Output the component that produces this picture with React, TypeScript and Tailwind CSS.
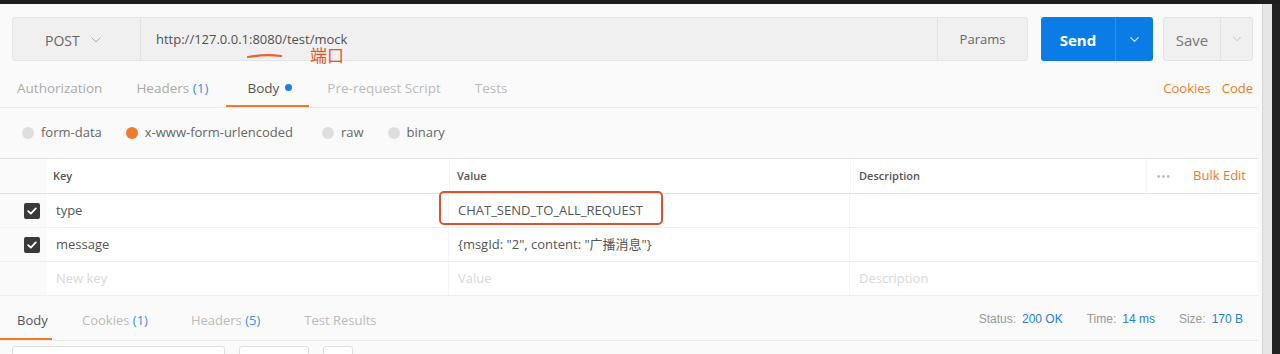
import { ChevronDown } from "lucide-react";

const orange = "text-[#f07a2a]";

const Check = () => (
  <div className="w-[16px] h-[16px] rounded-[2px] bg-[#3a3a3a] flex items-center justify-center">
    <svg width="10" height="8" viewBox="0 0 10 8" fill="none">
      <path d="M1.2 4.2 L3.8 6.6 L8.8 1.4" stroke="#fff" strokeWidth="1.8" strokeLinecap="round" strokeLinejoin="round" />
    </svg>
  </div>
);

const Radio = ({ on }: { on?: boolean }) => (
  <span
    className={`w-[12px] h-[12px] rounded-full ${on ? "bg-[#f07a2a]" : "bg-[#dedede]"}`}
  />
);

const Row = ({ k, v, placeholder, checked }: { k: string; v: string; placeholder?: boolean; checked?: boolean }) => (
  <div className="grid grid-cols-[47px_402px_401px_1fr] h-[34px] border-b border-[#eeeeee] bg-white">
    <div className="flex items-center pl-[24px] bg-[#fafafa]">{checked && <Check />}</div>
    <div className={`flex items-center pl-[9px] border-r border-[#f4f4f4] ${placeholder ? "text-[#d8d8d8]" : "text-[#555]"}`}>{k}</div>
    <div className={`flex items-center pl-[9px] border-r border-[#f4f4f4] ${placeholder ? "text-[#d8d8d8]" : "text-[#555]"}`}>{v}</div>
    <div className="flex items-center pl-[9px] text-[#d8d8d8]">{placeholder ? "Description" : ""}</div>
  </div>
);

export default function App() {
  return (
    <div
      className="w-[1280px] h-[354px] overflow-hidden bg-[#fafafa] flex flex-col text-[13px]"
      style={{ fontFamily: '"Open Sans", "Noto Sans CJK SC", sans-serif' }}
    >
      <div className="h-[4px] bg-[#1e1e1e] shrink-0" />
      <div className="flex flex-1 min-h-0">
        <div className="flex-1 min-w-0 relative">
          {/* request bar */}
          <div className="flex items-stretch h-[44px] mt-[13px] ml-[12px] mr-[9px]">
            <div className="flex flex-1 bg-[#f0f0f0] border border-[#e4e4e4] rounded-[3px]">
              <div className="w-[128px] flex items-center pl-[32px] gap-[8px] border-r border-[#e2e2e2] text-[#666] text-[14px] pt-[2px]">
                POST
                <ChevronDown size={16} strokeWidth={1.5} className="text-[#aaa]" />
              </div>
              <div className="flex-1 flex items-center pl-[15px] pt-[2px] text-[#505050]">http://127.0.0.1:8080/test/mock</div>
              <div className="w-[90px] flex items-center justify-center pt-[2px] border-l border-[#e2e2e2] text-[#666]">Params</div>
            </div>
            <div className="ml-[13px] w-[112px] flex bg-[#0b7be6] rounded-[3px] text-white">
              <div className="w-[74px] flex items-center justify-center pt-[2px] font-bold text-[15px]">Send</div>
              <div className="flex-1 flex items-center justify-center border-l border-[#2f8ded]">
                <ChevronDown size={15} strokeWidth={2} className="text-[#d6e8fb]" />
              </div>
            </div>
            <div className="ml-[10px] w-[90px] flex bg-[#f0f0f0] border border-[#e2e2e2] rounded-[3px] text-[#777]">
              <div className="w-[56px] flex items-center justify-center pt-[2px] text-[15px]">Save</div>
              <div className="flex-1 flex items-center justify-center border-l border-[#e2e2e2]">
                <ChevronDown size={14} strokeWidth={1.5} className="text-[#bbb]" />
              </div>
            </div>
          </div>

          {/* annotation: port */}
          <svg className="absolute left-[246px] top-[48px]" width="38" height="8" viewBox="0 0 38 8">
            <path d="M2 5 Q 18 2 35 4" stroke="#e9622c" strokeWidth="2.2" fill="none" strokeLinecap="round" />
          </svg>
          <div className="absolute left-[310px] top-[40px] text-[#e9532b] text-[17px] leading-[22px]" style={{ fontFamily: '"Noto Sans CJK SC", sans-serif' }}>
            端口
          </div>

          {/* request tabs */}
          <div className="flex items-end justify-between h-[47px] border-b border-[#ececec] mr-[4px] text-[13.5px]">
            <div className="flex">
              <div className="pl-[17px] pr-[16px] pb-[9px] text-[#aaa]">Authorization</div>
              <div className="px-[18px] pb-[9px] text-[#aaa]">
                Headers <span className="text-[#3b8fe3]">(1)</span>
              </div>
              <div className="pl-[21px] pr-[17px] pb-[7px] border-b-2 border-[#f07a2a] text-[#555] flex items-center gap-[6px]">
                Body <span className="w-[7px] h-[7px] rounded-full bg-[#1c7fe6]" />
              </div>
              <div className="px-[18px] pb-[9px] text-[#bbb]">Pre-request Script</div>
              <div className="px-[16px] pb-[9px] text-[#bbb]">Tests</div>
            </div>
            <div className={`flex gap-[11px] pb-[9px] pr-[5px] text-[13px] ${orange}`}>
              <span>Cookies</span>
              <span>Code</span>
            </div>
          </div>

          {/* body types */}
          <div className="flex items-center h-[50px] pl-[22px] text-[#666]">
            <div className="flex items-center gap-[7px]"><Radio />form-data</div>
            <div className="flex items-center gap-[7px] ml-[24px]"><Radio on />x-www-form-urlencoded</div>
            <div className="flex items-center gap-[7px] ml-[29px]"><Radio />raw</div>
            <div className="flex items-center gap-[7px] ml-[24px]"><Radio />binary</div>
          </div>

          {/* params table */}
          <div className="relative mr-[4px]">
            <div className="grid grid-cols-[47px_402px_401px_1fr] h-[36px] border-y border-[#e2e2e2] text-[11px] font-semibold text-[#555]">
              <div className="bg-[#fafafa]" />
              <div className="flex items-center pl-[6px] bg-white">Key</div>
              <div className="flex items-center pl-[7px] bg-white border-l border-[#f4f4f4]">Value</div>
              <div className="flex items-center pl-[8px] bg-white border-l border-[#f4f4f4]">
                <span className="flex-1">Description</span>
                <span className="text-[#bbb] tracking-[1px] text-[10px] pl-[10px] border-l border-[#f6f6f6] h-full flex items-center">•••</span>
                <span className={`ml-[22px] mr-[12px] text-[13px] font-normal ${orange}`}>Bulk Edit</span>
              </div>
            </div>
            <Row k="type" v="CHAT_SEND_TO_ALL_REQUEST" checked />
            <Row k="message" v={'{msgId: "2", content: "广播消息"}'} checked />
            <Row k="New key" v="Value" placeholder />
            <div className="absolute left-[439px] top-[33px] w-[224px] h-[34px] border-2 border-[#d9532e] rounded-[5px]" />
          </div>

          {/* response tabs */}
          <div className="flex items-end justify-between h-[45px] border-b border-[#e8e8e8] mr-[4px]">
            <div className="flex">
              <div className="w-[52px] pl-[17px] pb-[8px] border-b-2 border-[#f07a2a] text-[#555]">Body</div>
              <div className="ml-[30px] pb-[10px] text-[#bbb]">
                Cookies <span className="text-[#3b8fe3]">(1)</span>
              </div>
              <div className="ml-[43px] pb-[10px] text-[#bbb]">
                Headers <span className="text-[#3b8fe3]">(5)</span>
              </div>
              <div className="ml-[44px] pb-[10px] text-[#bbb]">Test Results</div>
            </div>
            <div className="flex pb-[12px] pr-[15px] text-[12px] text-[#999]" style={{ fontFamily: '"Liberation Sans", sans-serif' }}>
              <span>Status:</span><span className="ml-[6px] text-[#1f7fe0]">200 OK</span>
              <span className="ml-[24px]">Time:</span><span className="ml-[6px] text-[#1f7fe0]">14 ms</span>
              <span className="ml-[24px]">Size:</span><span className="ml-[6px] text-[#1f7fe0]">170 B</span>
            </div>
          </div>

          {/* response toolbar (cut off) */}
          <div className="flex gap-[14px] pl-[12px] pt-[5px]">
            <div className="w-[213px] h-[20px] bg-white border border-[#ddd] rounded-[3px]" />
            <div className="w-[70px] h-[20px] bg-white border border-[#ddd] rounded-[3px]" />
            <div className="w-[30px] h-[20px] bg-white border border-[#ddd] rounded-[3px]" />
          </div>
        </div>
        <div className="w-[10px] bg-[#e6e6e6] border-l border-[#d6d6d6]" />
        <div className="w-[8px] bg-[#222]" />
      </div>
    </div>
  );
}
